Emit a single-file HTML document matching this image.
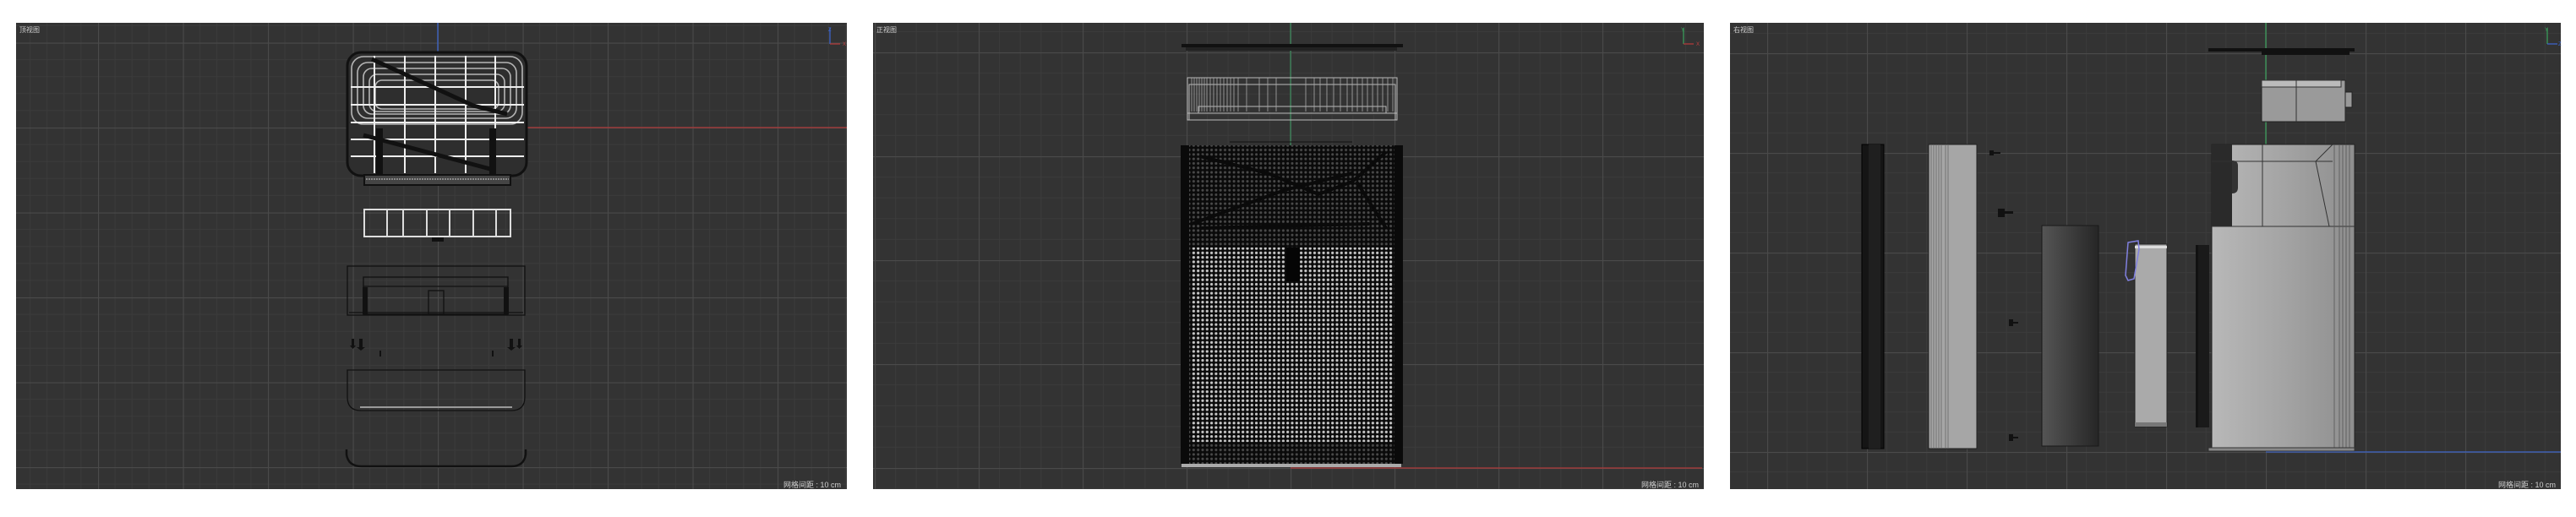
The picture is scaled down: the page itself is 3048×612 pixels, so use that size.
<!DOCTYPE html>
<html><head><meta charset="utf-8"><style>
html,body{margin:0;padding:0;background:#fff;width:3048px;height:612px;overflow:hidden}
svg{display:block}
text{font-family:"Liberation Sans","Noto Sans CJK SC",sans-serif;fill:#cfcfcf}
</style></head><body>
<svg width="3048" height="612" viewBox="0 0 3048 612" xmlns="http://www.w3.org/2000/svg">
<defs>
<pattern id="g1" patternUnits="userSpaceOnUse" x="518" y="151" width="100.5" height="100.5">
<rect width="100.5" height="100.5" fill="#333"/>
<path d="M20.1 0V100.5M40.2 0V100.5M60.3 0V100.5M80.4 0V100.5M0 20.1H100.5M0 40.2H100.5M0 60.3H100.5M0 80.4H100.5" stroke="#3b3b3b" stroke-width="1"/>
<path d="M0.5 0V100.5M0 0.5H100.5" stroke="#4a4a4a" stroke-width="1.2"/>
</pattern>
<pattern id="g2" patternUnits="userSpaceOnUse" x="1527" y="554" width="123" height="123">
<rect width="123" height="123" fill="#333"/>
<path d="M24.6 0V123M49.2 0V123M73.8 0V123M98.4 0V123M0 24.6H123M0 49.2H123M0 73.8H123M0 98.4H123" stroke="#3b3b3b"/>
<path d="M0.5 0V123M0 0.5H123" stroke="#4a4a4a" stroke-width="1.2"/>
</pattern>
<pattern id="g3" patternUnits="userSpaceOnUse" x="2681" y="535" width="118" height="118">
<rect width="118" height="118" fill="#333"/>
<path d="M23.6 0V118M47.2 0V118M70.8 0V118M94.4 0V118M0 23.6H118M0 47.2H118M0 70.8H118M0 94.4H118" stroke="#3b3b3b"/>
<path d="M0.5 0V118M0 0.5H118" stroke="#4a4a4a" stroke-width="1.2"/>
</pattern>
<pattern id="dotD" patternUnits="userSpaceOnUse" width="5.3" height="5.3">
<rect width="5.3" height="5.3" fill="#0a0a0a"/><circle cx="2.6" cy="2.6" r="1.5" fill="#4a4a4a"/>
</pattern>
<pattern id="dotL" patternUnits="userSpaceOnUse" width="5.3" height="5.3">
<rect width="5.3" height="5.3" fill="#0a0a0a"/><circle cx="2.6" cy="2.6" r="1.6" fill="#c8c8c8"/>
</pattern>
<linearGradient id="dk" x1="0" x2="1"><stop offset="0" stop-color="#555"/><stop offset="1" stop-color="#262626"/></linearGradient>
<linearGradient id="gb" x1="0" x2="1"><stop offset="0" stop-color="#b8b8b8"/><stop offset=".5" stop-color="#a4a4a4"/><stop offset="1" stop-color="#8e8e8e"/></linearGradient>
</defs>

<!-- PANEL 1 -->
<rect x="19" y="27" width="983" height="552" fill="url(#g1)"/>
<text x="23" y="38" font-size="8">顶视图</text>
<line x1="518" y1="27" x2="518" y2="62" stroke="#3d64c8" stroke-width="1.3"/>
<line x1="623" y1="151" x2="1002" y2="151" stroke="#b03a3a" stroke-width="1.3"/>
<g stroke-width="1.3"><line x1="982" y1="33" x2="982" y2="52" stroke="#3d64c8"/><line x1="982" y1="52" x2="994" y2="52" stroke="#b03a3a"/></g>
<text x="980" y="37" font-size="6" style="fill:#3d64c8">Z</text><text x="997" y="54" font-size="6" style="fill:#c04040">X</text>
<text x="995" y="577" font-size="9" text-anchor="end">网格间距 : 10 cm</text>
<rect x="411" y="62" width="212" height="146" rx="16" fill="#2e2e2e" stroke="#111" stroke-width="3"/>
<g fill="none" stroke="#b5b5b5" stroke-width="1.6">
<rect x="416" y="67" width="202" height="80" rx="14"/><rect x="423" y="74" width="188" height="66" rx="12"/><rect x="430" y="81" width="174" height="54" rx="10"/><rect x="437" y="88" width="160" height="44" rx="9"/><rect x="444" y="95" width="146" height="34" rx="8"/>
</g>
<g stroke="#eee" stroke-width="2"><line x1="443" y1="66" x2="443" y2="205"/><line x1="479" y1="66" x2="479" y2="205"/><line x1="515" y1="66" x2="515" y2="205"/><line x1="551" y1="66" x2="551" y2="205"/><line x1="586" y1="66" x2="586" y2="205"/>
<line x1="415" y1="103" x2="620" y2="103"/><line x1="415" y1="124" x2="620" y2="124"/><line x1="415" y1="145" x2="620" y2="145"/><line x1="415" y1="165" x2="620" y2="165"/><line x1="415" y1="185" x2="620" y2="185"/></g>
<path d="M440 70L560 125L600 135M430 160L580 200" stroke="#111" stroke-width="5" fill="none"/>
<rect x="445" y="152" width="8" height="54" fill="#111"/><rect x="579" y="152" width="8" height="54" fill="#111"/>
<rect x="431" y="207" width="173" height="12" fill="#444" stroke="#111" stroke-width="2"/>
<line x1="433" y1="212" x2="602" y2="212" stroke="#ccc" stroke-dasharray="2 1"/>
<rect x="431" y="248" width="173" height="32" fill="none" stroke="#ddd" stroke-width="2"/>
<g stroke="#ddd" stroke-width="2"><line x1="458" y1="248" x2="458" y2="280"/><line x1="477" y1="248" x2="477" y2="280"/><line x1="505" y1="248" x2="505" y2="280"/><line x1="532" y1="248" x2="532" y2="280"/><line x1="560" y1="248" x2="560" y2="280"/><line x1="587" y1="248" x2="587" y2="280"/></g>
<rect x="511" y="281" width="14" height="5" fill="#111"/>
<g fill="none" stroke="#111" stroke-width="1.3">
<rect x="411" y="315" width="210" height="58"/><rect x="430" y="328" width="171" height="44"/><line x1="430" y1="339" x2="601" y2="339"/><rect x="507" y="344" width="18" height="28"/><line x1="413" y1="370" x2="619" y2="370"/>
</g>
<rect x="429" y="340" width="6" height="32" fill="#111"/><rect x="596" y="340" width="6" height="32" fill="#111"/>
<g fill="#111"><rect x="416" y="401" width="3" height="10"/><path d="M414 409h7l-3.5 4z"/><rect x="425" y="401" width="4" height="12"/><path d="M422 411h10l-5 4z"/><rect x="449" y="415" width="2" height="7"/><rect x="582" y="415" width="2" height="7"/><rect x="603" y="401" width="4" height="12"/><path d="M600 411h10l-5 4z"/><rect x="613" y="401" width="3" height="10"/><path d="M611 409h7l-3.5 4z"/></g>
<path d="M411 438H621V470Q621 486 605 486H427Q411 486 411 470Z" fill="none" stroke="#111" stroke-width="1.3"/>
<line x1="426" y1="482" x2="606" y2="482" stroke="#999" stroke-width="2"/>
<path d="M410 532V538Q412 552 428 552H605Q620 552 622 538V532" fill="none" stroke="#111" stroke-width="2.5"/>

<!-- PANEL 2 -->
<rect x="1033" y="27" width="983" height="552" fill="url(#g2)"/>
<text x="1037" y="38" font-size="8">正视图</text>
<rect x="1397" y="172" width="263" height="377" fill="url(#dotD)"/>
<rect x="1410" y="293" width="238" height="230" fill="url(#dotL)"/>
<rect x="1397" y="172" width="10" height="377" fill="#0a0a0a"/><rect x="1650" y="172" width="10" height="377" fill="#0a0a0a"/>
<path d="M1420 185L1500 205L1560 230L1600 215L1640 180M1410 265L1520 225L1600 205M1420 270L1620 265M1605 215L1640 270" stroke="#0a0a0a" stroke-width="4" fill="none"/>
<rect x="1522" y="293" width="16" height="40" fill="#050505"/>
<rect x="1398" y="549" width="260" height="4" fill="#aaa"/>
<line x1="1527" y1="27" x2="1527" y2="172" stroke="#3a8a5a" stroke-width="1.2"/>
<line x1="1527" y1="554" x2="2014" y2="554" stroke="#b03a3a" stroke-width="1.3"/>
<rect x="1398" y="52" width="262" height="4" fill="#111"/><rect x="1403" y="56" width="250" height="4" fill="#222"/>
<g fill="none" stroke="#bbb" stroke-width="1">
<rect x="1405" y="92" width="248" height="50"/><rect x="1407" y="100" width="244" height="42"/><rect x="1418" y="126" width="222" height="8"/><line x1="1405" y1="134" x2="1653" y2="134"/>
</g>
<g stroke="#aaa" stroke-width="0.8">
<path d="M1410 92v40M1413 92v40M1416 92v40M1419 92v40M1422 92v40M1425 92v40M1428 92v40M1432 92v40M1436 92v40M1440 92v40M1444 92v40M1448 92v40M1452 92v40M1456 92v40M1460 92v40M1465 92v40M1475 92v40M1490 92v40M1500 92v40M1510 92v40M1545 92v40M1555 92v40M1562 92v40M1570 92v40M1578 92v40M1586 92v40M1594 92v40M1600 92v40M1606 92v40M1612 92v40M1618 92v40M1624 92v40M1630 92v40M1636 92v40M1642 92v40M1648 92v40"/>
</g>
<line x1="1455" y1="168" x2="1600" y2="168" stroke="#111"/>
<g stroke-width="1.3"><line x1="1992" y1="33" x2="1992" y2="52" stroke="#3a9a5a"/><line x1="1992" y1="52" x2="2004" y2="52" stroke="#b03a3a"/></g>
<text x="1989" y="37" font-size="6" style="fill:#3a9a5a">Y</text><text x="2007" y="54" font-size="6" style="fill:#c04040">X</text>
<text x="2010" y="577" font-size="9" text-anchor="end">网格间距 : 10 cm</text>

<!-- PANEL 3 -->
<rect x="2047" y="27" width="983" height="552" fill="url(#g3)"/>
<text x="2051" y="38" font-size="8">右视图</text>
<line x1="2681" y1="27" x2="2681" y2="172" stroke="#3a9a5a" stroke-width="1.3"/>
<line x1="2681" y1="535" x2="3030" y2="535" stroke="#3d64c8" stroke-width="1.3"/>
<rect x="2613" y="57" width="173" height="4" fill="#111"/><rect x="2676" y="61" width="104" height="4" fill="#111"/>
<rect x="2676" y="95" width="99" height="49" fill="#9a9a9a" stroke="#222"/><rect x="2676" y="95" width="94" height="8" fill="#bbb" stroke="#333"/><line x1="2717" y1="95" x2="2717" y2="144" stroke="#333"/><rect x="2775" y="109" width="8" height="18" fill="#999" stroke="#222"/>
<rect x="2203" y="171" width="26" height="360" fill="#151515" stroke="#000"/>
<rect x="2211" y="171" width="14" height="360" fill="#1f1f1f"/>
<rect x="2282" y="171" width="57" height="360" fill="#a6a6a6" stroke="#222"/>
<g stroke="#666" stroke-width="0.8"><path d="M2285 171v360M2288 171v360M2291 171v360M2294 171v360M2297 171v360M2302 171v360M2305 171v360"/></g>
<rect x="2416" y="267" width="67" height="261" fill="url(#dk)" stroke="#1a1a1a"/>
<rect x="2526" y="289" width="38" height="216" fill="#aaa" stroke="#222"/><rect x="2526" y="291" width="38" height="3" fill="#ddd"/><rect x="2526" y="500" width="38" height="5" fill="#777"/>
<path d="M2518 287L2530 285L2531 295L2525 330L2518 332L2515 326Z" fill="none" stroke="#8080e0" stroke-width="1.5"/>
<rect x="2601" y="290" width="13" height="216" fill="#1a1a1a"/><rect x="2598" y="290" width="3" height="216" fill="#111"/>
<rect x="2617" y="171" width="169" height="362" fill="url(#gb)" stroke="#222"/>
<rect x="2617" y="171" width="24" height="97" fill="#2a2a2a"/>
<path d="M2641 171V229Q2648 229 2648 222V196Q2648 190 2641 190" fill="#333"/>
<line x1="2617" y1="191" x2="2760" y2="191" stroke="#333"/><line x1="2617" y1="268" x2="2786" y2="268" stroke="#333"/>
<line x1="2677" y1="171" x2="2677" y2="268" stroke="#333"/>
<path d="M2760 171L2740 191L2756 268" fill="none" stroke="#333"/>
<g stroke="#555" stroke-width="0.8"><path d="M2762 171v362M2768 171v362M2772 171v362M2776 171v362M2780 171v362"/></g>
<rect x="2613" y="530" width="173" height="4" fill="#888" stroke="#333"/>
<g fill="#111"><path d="M2354 178h5v6h-5zM2359 180h8v2h-8z"/><path d="M2364 247h8v10h-8zM2372 250h10v3h-10z"/><path d="M2377 378h5v8h-5zM2382 381h6v2h-6z"/><path d="M2377 514h5v8h-5zM2382 517h6v2h-6z"/></g>
<g stroke-width="1.3"><line x1="3014" y1="33" x2="3014" y2="52" stroke="#3a9a5a"/><line x1="3014" y1="52" x2="3026" y2="52" stroke="#3d64c8"/></g>
<text x="3011" y="37" font-size="6" style="fill:#3a9a5a">Y</text><text x="3027" y="54" font-size="6" style="fill:#3d64c8">Z</text>
<text x="3024" y="577" font-size="9" text-anchor="end">网格间距 : 10 cm</text>
</svg>
</body></html>
